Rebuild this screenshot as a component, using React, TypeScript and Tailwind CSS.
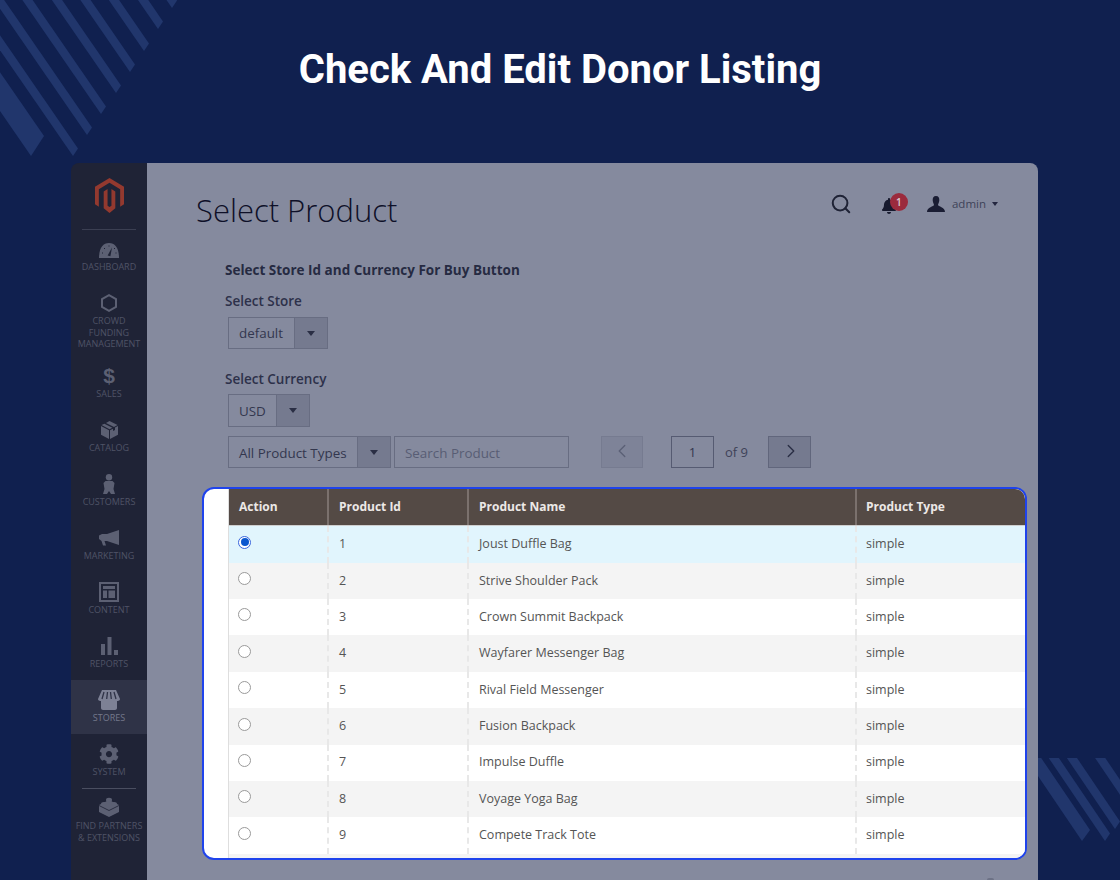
import { ChevronLeft, ChevronRight, Search } from 'lucide-react';
import { FaBell, FaCog } from 'react-icons/fa';

const iconTone = 'fill-[#5c6073]';

const GaugeIcon = () => (
  <svg width="20" height="15" viewBox="0 0 20 15" className={iconTone}>
    <path d="M0 15 C0 5 4 0 10 0 C16 0 20 5 20 15 Z" />
    <path d="M8.6 12.5 L13 4.5 L11.4 13.2 Z" fill="#1f2336" />
    <path d="M3 10 h1 M5 5.5 h1 M9.5 3 h1 M15 5.5 h1 M16.5 10 h1" stroke="#1f2336" strokeWidth="1" />
  </svg>
);
const HexIcon = () => (
  <svg width="16" height="18" viewBox="0 0 16 18" fill="none" stroke="#5c6073" strokeWidth="2">
    <path d="M8 1.2 L15 5 V13 L8 16.8 L1 13 V5 Z" />
  </svg>
);
const DollarIcon = () => (
  <span className="text-[21px] leading-[20px] font-bold text-[#5c6073] font-['Liberation_Sans',sans-serif]">$</span>
);
const BoxIcon = () => (
  <svg width="17" height="18" viewBox="0 0 17 18" className={iconTone}>
    <path d="M8.5 0 L16.5 4 L13 6 L5 2 Z M3.4 2.8 L11.4 6.8 L8.5 8.3 L.5 4 Z" />
    <path d="M0 5 L8 9.3 V18 L0 13.7 Z M17 5 V13.7 L9 18 V9.3 L12 7.7 V10 L14 9 V6.6 Z" />
  </svg>
);
const PersonIcon = () => (
  <svg width="12" height="20" viewBox="0 0 12 20" className={iconTone}>
    <circle cx="6" cy="3.2" r="3.2" />
    <path d="M2.5 7 H9.5 L11.5 9 L10.5 15 L12 20 H8 L6 17 L4 20 H0 L1.5 15 L.5 9 Z" />
  </svg>
);
const MegaphoneIcon = () => (
  <svg width="20" height="16" viewBox="0 0 20 16" className={iconTone}>
    <path d="M20 0 V15 L8 11 H5.5 L7 15.5 H4 L2.5 11 L0 9 V5.5 L3 4 H8 Z" />
  </svg>
);
const ContentIcon = () => (
  <svg width="20" height="20" viewBox="0 0 20 20" className={iconTone}>
    <path fillRule="evenodd" d="M0 0 H20 V20 H0 Z M2 2 V18 H18 V2 Z" />
    <path d="M4 4 H16 V7 H4 Z M4 8.5 H8 V16 H4 Z M9.5 8.5 H16 V16 H9.5 Z" />
  </svg>
);
const ReportsIcon = () => (
  <svg width="17" height="18" viewBox="0 0 17 18" className={iconTone}>
    <path d="M0 7 H4 V18 H0 Z M6.5 0 H10.5 V18 H6.5 Z M13 13 H17 V18 H13 Z" />
  </svg>
);
const StoreIcon = () => (
  <svg width="22" height="20" viewBox="0 0 22 20" fill="#7d8195">
    <path d="M4 0 H18 L22 9 C22 11 19 11 19 11 V18 C19 19 18 20 17 20 H5 C4 20 3 19 3 18 V11 C3 11 0 11 0 9 Z" />
    <path d="M6 2 L4 9 M9.5 2 L8.7 9 M12.5 2 L13.3 9 M16 2 L18 9" stroke="#2f3347" strokeWidth="1.3" fill="none" />
  </svg>
);
const BrickIcon = () => (
  <svg width="20" height="20" viewBox="0 0 20 20" className={iconTone}>
    <path d="M10 3 L20 8 V15 L10 20 L0 15 V8 Z" />
    <ellipse cx="10" cy="3" rx="3" ry="2.2" />
    <ellipse cx="5" cy="7" rx="3" ry="2" />
    <ellipse cx="15" cy="7" rx="3" ry="2" />
    <path d="M0 8.5 L10 13.5 L20 8.5" stroke="#1f2336" strokeWidth=".8" fill="none" />
  </svg>
);

const navItems = [
  { label: ['DASHBOARD'], icon: <GaugeIcon />, box: 'h-[54px] pt-[11px]', gap: 'mt-[1px]' },
  { label: ['CROWD', 'FUNDING', 'MANAGEMENT'], icon: <HexIcon />, box: 'h-[73px] pt-[10px]', gap: 'mt-[2px]' },
  { label: ['SALES'], icon: <DollarIcon />, box: 'h-[54px] pt-[10px]', gap: 'mt-[2px]' },
  { label: ['CATALOG'], icon: <BoxIcon />, box: 'h-[54px] pt-[10px]', gap: 'mt-[2px]' },
  { label: ['CUSTOMERS'], icon: <PersonIcon />, box: 'h-[54px] pt-[10px]', gap: 'mt-[2px]' },
  { label: ['MARKETING'], icon: <MegaphoneIcon />, box: 'h-[54px] pt-[10px]', gap: 'mt-[2px]' },
  { label: ['CONTENT'], icon: <ContentIcon />, box: 'h-[54px] pt-[10px]', gap: 'mt-[2px]' },
  { label: ['REPORTS'], icon: <ReportsIcon />, box: 'h-[54px] pt-[10px]', gap: 'mt-[2px]' },
  { label: ['STORES'], icon: <StoreIcon />, box: 'h-[54px] pt-[10px] bg-[#2f3347]', gap: 'mt-[2px] text-[#74788b]' },
  { label: ['SYSTEM'], icon: <FaCog size={20} color="#5c6073" />, box: 'h-[54px] pt-[10px]', gap: 'mt-[2px]' },
];

const products = [
  'Joust Duffle Bag',
  'Strive Shoulder Pack',
  'Crown Summit Backpack',
  'Wayfarer Messenger Bag',
  'Rival Field Messenger',
  'Fusion Backpack',
  'Impulse Duffle',
  'Voyage Yoga Bag',
  'Compete Track Tote',
];

function Stripes({ tips, width }: { tips: { x: number; y: number; thick?: boolean }[]; width: number }) {
  return (
    <svg width={width} height="160" viewBox={`0 0 ${width} 160`}>
      {tips.map((t) => {
        const dx = t.thick ? 13 : 5;
        const dy = t.thick ? 20 : 7.6;
        return (
          <polygon
            key={t.x}
            fill="#21366c"
            points={`${t.x},${t.y} ${t.x + dx},${t.y - dy} ${t.x + dx - 220},${t.y - dy - 319} ${t.x - 220},${t.y - 319}`}
          />
        );
      })}
    </svg>
  );
}

function NavItem({ label, icon, box, gap }: { label: string[]; icon: React.ReactNode; box: string; gap: string }) {
  return (
    <div className={`flex flex-col items-center ${box}`}>
      <div className="flex h-[20px] items-center justify-center">{icon}</div>
      <div className={`text-center text-[9px] leading-[11.6px] text-[#4f5366] ${gap}`}>
        {label.map((l) => (
          <div key={l} className="whitespace-nowrap">{l}</div>
        ))}
      </div>
    </div>
  );
}

function SelectBox({ text, size, arrow }: { text: string; size: string; arrow: string }) {
  return (
    <div className={`flex border border-[#686d82] text-[13.4px] text-[#33374e] ${size}`}>
      <div className="flex flex-1 items-center pl-[10px] whitespace-nowrap">{text}</div>
      <div className={`flex items-center justify-center border-l border-[#686d82] bg-[#757a8f] ${arrow}`}>
        <div className="h-0 w-0 border-x-[4px] border-t-[5px] border-x-transparent border-t-[#2a2e44]" />
      </div>
    </div>
  );
}

function Radio({ checked }: { checked?: boolean }) {
  if (checked) {
    return (
      <div className="flex h-[13px] w-[13px] items-center justify-center rounded-full border border-[#3a66dd] bg-white">
        <div className="h-[8px] w-[8px] rounded-full bg-[#0b57cf]" />
      </div>
    );
  }
  return <div className="h-[13px] w-[13px] rounded-full border border-[#9a9a9a] bg-white" />;
}

export default function App() {
  return (
    <div className="relative h-[880px] w-[1120px] overflow-hidden bg-[#10204f] font-['Open_Sans',sans-serif]">
      <div className="absolute top-0 left-0">
        <Stripes
          width={190}
          tips={[
            { x: 31, y: 156, thick: true },
            { x: 73, y: 156 },
            { x: 87, y: 135 },
            { x: 101, y: 114 },
            { x: 116, y: 93 },
            { x: 130, y: 72 },
            { x: 144, y: 51 },
            { x: 158, y: 29 },
            { x: 172, y: 8 },
          ]}
        />
      </div>
      <div className="absolute top-[758px] left-[1038px] h-[90px] w-[82px] overflow-hidden">
        <div className="absolute top-[-758px] left-[-1038px] h-[880px] w-[1120px]">
          <svg width="1120" height="880" viewBox="0 0 1120 880">
            {[
              { x: 1082, y: 841, dx: 8, dy: 11 },
              { x: 1105, y: 841, dx: 5, dy: 7.6 },
              { x: 1115, y: 829, dx: 5, dy: 7.6 },
              { x: 1129, y: 808, dx: 5, dy: 7.6 },
              { x: 1143, y: 787, dx: 5, dy: 7.6 },
              { x: 1157, y: 766, dx: 5, dy: 7.6 },
            ].map((s) => (
              <polygon
                key={s.x}
                fill="#21366c"
                points={`${s.x},${s.y} ${s.x + s.dx},${s.y - s.dy} ${s.x + s.dx - 120},${s.y - s.dy - 177} ${s.x - 120},${s.y - 177}`}
              />
            ))}
          </svg>
        </div>
      </div>

      <div className="relative flex h-[163px] justify-center pt-[42px]">
        <h1 className="text-[40px] leading-[56px] font-bold text-white font-['Roboto',sans-serif]">
          Check And Edit Donor Listing
        </h1>
      </div>

      <div className="relative ml-[71px] flex h-[717px] w-[967px] overflow-hidden rounded-t-[8px]">
        <aside className="flex w-[76px] shrink-0 flex-col bg-[#1f2336]">
          <div className="flex h-[66px] flex-col items-center">
            <svg width="31" height="35" viewBox="0 0 32 34" preserveAspectRatio="none" className="mt-[15px] fill-[#93392f]">
              <path d="M16 0 L31 8.5 V25.5 L27 28 V11 L16 4.5 L5 11 V28 L1 25.5 V8.5 Z" />
              <path d="M10 13 L14 10.8 V27 L16 28.2 L18 27 V10.8 L22 13 V29.5 L16 34 L10 29.5 Z" />
            </svg>
          </div>
          <div className="mx-[11px] -mb-px h-px bg-[#3b3f52]" />
          {navItems.map((item) => (
            <NavItem key={item.label[0]} label={item.label} icon={item.icon} box={item.box} gap={item.gap} />
          ))}
          <div className="mx-[11px] -mb-px h-px bg-[#4a4e60]" />
          <NavItem label={['FIND PARTNERS', '& EXTENSIONS']} icon={<BrickIcon />} box="h-[60px] pt-[9px]" gap="mt-[3px]" />
        </aside>

        <main className="flex min-w-0 flex-1 flex-col bg-[#858a9e] text-[#23263f]">
          <div className="flex h-[88px] items-center pr-[40px] pl-[49px]">
            <div className="mt-[6px] flex-1 text-[31px] leading-[40px] font-light text-[#0e1028]">Select Product</div>
            <div className="mb-[4px] flex items-center">
              <Search size={22} strokeWidth={2.2} className="mr-[29px] -translate-y-[1px] text-[#1f2336]" />
              <div className="relative mr-[19px] h-[20px] w-[27px]">
                <FaBell size={16} className="absolute top-[3px] left-0 text-[#171a2e]" />
                <div className="absolute top-[-2px] left-[9px] flex h-[18px] w-[18px] items-center justify-center rounded-full bg-[#9b2b3d] text-[10px] font-semibold text-[#d9cbd0]">
                  1
                </div>
              </div>
              <svg width="18" height="16" viewBox="0 0 18 16" className="mr-[7px] -translate-y-[1px] fill-[#1a1d33]">
                <path d="M9 0 C11.5 0 12.5 2 12.3 4.5 C12.1 6.8 11 8 11 9 C11 10.5 18 11 18 16 H0 C0 11 7 10.5 7 9 C7 8 5.9 6.8 5.7 4.5 C5.5 2 6.5 0 9 0 Z" />
              </svg>
              <span className="-translate-y-[1px] text-[11.5px] leading-[16px] text-[#3e4258]">admin</span>
              <div className="ml-[6px] h-0 w-0 -translate-y-[1px] border-x-[3.5px] border-t-[4px] border-x-transparent border-t-[#23263f]" />
            </div>
          </div>

          <div className="ml-[78px] text-[13.5px] leading-[20px]">
            <div className="mt-[9px] font-bold text-[#262a42]">Select Store Id and Currency For Buy Button</div>
            <div className="mt-[11px] font-semibold text-[#2d314a]">Select Store</div>
            <div className="mt-[6px] ml-[3px]">
              <SelectBox text="default" size="h-[32px] w-[100px]" arrow="w-[33px]" />
            </div>
            <div className="mt-[20px] font-semibold text-[#2d314a]">Select Currency</div>
            <div className="mt-[5px] ml-[3px]">
              <SelectBox text="USD" size="h-[33px] w-[82px]" arrow="w-[33px]" />
            </div>
            <div className="mt-[9px] ml-[3px] flex items-center">
              <SelectBox text="All Product Types" size="h-[32px] w-[163px] pt-[1px]" arrow="w-[33px] -mt-[1px]" />
              <div className="ml-[3px] flex h-[32px] w-[175px] items-center border border-[#686d82] pt-[1px] pl-[10px] text-[13.4px] text-[#585d74]">
                Search Product
              </div>
              <div className="ml-[32px] flex h-[32px] w-[42px] items-center justify-center border border-[#767b90] bg-[#7e8398]">
                <ChevronLeft size={22} strokeWidth={1.5} className="-translate-y-[1px] text-[#5b6076]" />
              </div>
              <div className="ml-[28px] flex h-[32px] w-[43px] items-center justify-center border border-[#565b72] text-[13px] text-[#33374e]">
                1
              </div>
              <div className="ml-[11px] w-[43px] text-[13px] text-[#3e4258]">of 9</div>
              <div className="flex h-[32px] w-[43px] items-center justify-center border border-[#61667c] bg-[#757a8f]">
                <ChevronRight size={22} strokeWidth={1.5} className="translate-x-[1px] -translate-y-[1px] text-[#2a2e44]" />
              </div>
            </div>
          </div>

          <div className="mt-[19px] ml-[55px] flex h-[373px] w-[825px] overflow-hidden rounded-[12px] border-2 border-[#1f43ec] bg-white">
            <div className="w-[24px] shrink-0" />
            <div className="flex-1 border-l border-[#dedede] bg-[#f4f4f4]">
              <div className="grid h-[37.3px] grid-cols-[98px_140px_388px_1fr] border-b border-[#cfcfcf] bg-[#544a45] text-[12px] font-bold text-[#ece8e6]">
                {['Action', 'Product Id', 'Product Name', 'Product Type'].map((h, i) => (
                  <div
                    key={h}
                    className={`flex items-center ${i > 0 ? 'border-l-2 border-[#7b716d]' : ''} ${i === 3 ? 'pl-[9px]' : 'pl-[10px]'}`}
                  >
                    {h}
                  </div>
                ))}
              </div>
              {products.map((name, i) => (
                <div
                  key={name}
                  className={`grid h-[36.4px] grid-cols-[98px_140px_388px_1fr] text-[12.5px] text-[#555] ${
                    i === 0 ? 'bg-[#e1f5fd]' : i % 2 === 1 ? 'bg-[#f4f4f4]' : 'bg-white'
                  }`}
                >
                  <div className="pt-[9.4px] pl-[9px]">
                    <Radio checked={i === 0} />
                  </div>
                  <div className="flex items-center border-l-2 border-dashed border-[#e8e8e8] pl-[10px]">{i + 1}</div>
                  <div className="flex items-center border-l-2 border-dashed border-[#e8e8e8] pl-[10px]">{name}</div>
                  <div className="flex items-center border-l-2 border-dashed border-[#e8e8e8] pl-[9px]">simple</div>
                </div>
              ))}
            </div>
          </div>
        </main>
        <div className="absolute bottom-0 left-[916px] h-[2px] w-[7px] rounded-t-full bg-[#6d7286]" />
      </div>
    </div>
  );
}
